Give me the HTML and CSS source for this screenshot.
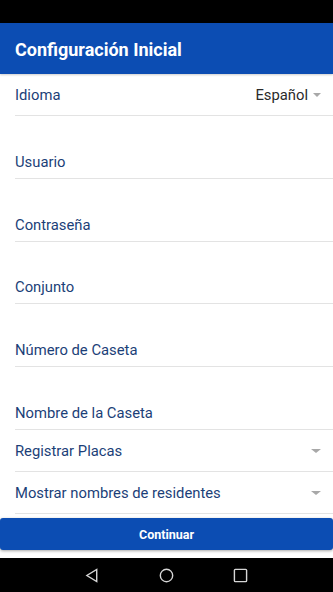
FILE: index.html
```html
<!DOCTYPE html>
<html>
<head>
    <link rel="stylesheet" href="styles.css">
</head>
<body>
    <div class="screen">
        <div class="status-bar"></div>
        <header class="app-bar">
            <span class="app-title">Configuración Inicial</span>
        </header>

        <div class="form">
            <div class="row select-row lang-row">
                <span class="label">Idioma</span>
                <span class="value">Español <span class="caret"></span></span>
            </div>
            <div class="row field"><span class="label">Usuario</span></div>
            <div class="row field"><span class="label">Contraseña</span></div>
            <div class="row field short"><span class="label">Conjunto</span></div>
            <div class="row field"><span class="label">Número de Caseta</span></div>
            <div class="row field"><span class="label">Nombre de la Caseta</span></div>
            <div class="row select-row">
                <span class="label">Registrar Placas</span>
                <span class="caret wide"></span>
            </div>
            <div class="row select-row">
                <span class="label">Mostrar nombres de residentes</span>
                <span class="caret wide"></span>
            </div>
        </div>

        <button class="continue-button">Continuar</button>

        <nav class="nav-bar">
            <svg viewBox="0 0 16 16" class="nav-icon">
                <path d="M12.5 1.5v13L2 8z"/>
            </svg>
            <svg viewBox="0 0 16 16" class="nav-icon">
                <circle cx="8" cy="8" r="6.6"/>
            </svg>
            <svg viewBox="0 0 16 16" class="nav-icon">
                <rect x="1.5" y="1.5" width="13" height="13" rx="1"/>
            </svg>
        </nav>
    </div>
</body>
</html>
```

FILE: styles.css
```css
html, body {
    margin: 0;
    padding: 0;
    background: #ffffff;
}

.screen {
    width: 333px;
    height: 592px;
    display: flex;
    flex-direction: column;
    font-family: Roboto, 'Noto Sans', sans-serif;
}

.status-bar {
    height: 23px;
    background: #000000;
}

.app-bar {
    height: 51px;
    background: #0c4db3;
    display: flex;
    align-items: center;
    padding-left: 15px;
    box-shadow: 0 1px 2px rgba(0, 0, 0, 0.2);
}

.app-title {
    color: #ffffff;
    font-size: 18px;
    font-weight: 700;
    padding-top: 1px;
}

.form {
    padding-left: 15px;
}

.row {
    display: flex;
    align-items: center;
    border-bottom: 1px solid #e3e3e3;
    color: #1c3f78;
    font-size: 14.8px;
}

.lang-row {
    height: 41px;
}

.field {
    height: 62px;
    align-items: flex-end;
}

.field.short {
    height: 61px;
}

.field .label {
    margin-bottom: 7px;
}

.select-row {
    height: 41px;
    justify-content: space-between;
}

.value {
    color: #2a2a2a;
    display: flex;
    align-items: center;
    gap: 5px;
    padding-right: 12px;
}

.caret {
    width: 0;
    height: 0;
    border-left: 4px solid transparent;
    border-right: 4px solid transparent;
    border-top: 4px solid #a8a8a8;
}

.caret.wide {
    margin-right: 12px;
    border-left-width: 5px;
    border-right-width: 5px;
}

.continue-button {
    margin: 4px 0 0 0;
    height: 32px;
    border: none;
    border-radius: 3px;
    background: #0c4db3;
    color: #ffffff;
    font-family: Roboto, 'Noto Sans', sans-serif;
    font-size: 12.5px;
    font-weight: 700;
    box-shadow: 0 1px 3px rgba(0, 0, 0, 0.35);
}

.nav-bar {
    margin-top: auto;
    height: 34px;
    background: #000000;
    display: flex;
    align-items: center;
    justify-content: center;
    gap: 59px;
}

.nav-icon {
    width: 15px;
    height: 15px;
    fill: none;
    stroke: #d6d6d6;
    stroke-width: 1.5;
}
```
